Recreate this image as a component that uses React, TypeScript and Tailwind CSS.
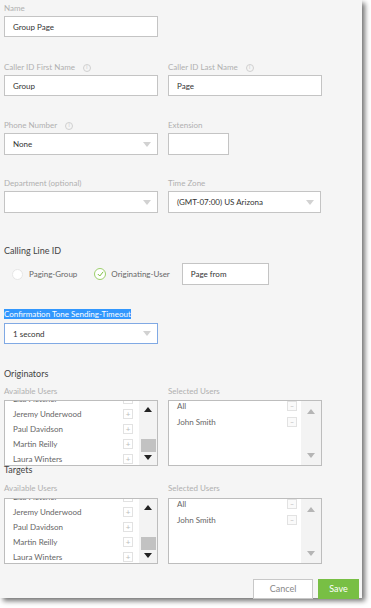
import React from "react";

const font = { fontFamily: "Lato, 'Open Sans', sans-serif" };

const Info = () => (
  <span className="ml-[8px] inline-flex h-[8px] w-[8px] items-center justify-center rounded-full border border-[#d0d0d0] text-[5px] leading-none text-[#c8c8c8]">
    i
  </span>
);

const Caret = ({ color = "#d2d2d2" }: { color?: string }) => (
  <svg width="8" height="5" viewBox="0 0 8 5">
    <path d="M0 0 L8 0 L4 5 Z" fill={color} />
  </svg>
);

const Label = ({ children, className = "" }: { children: React.ReactNode; className?: string }) => (
  <div className={"flex h-[11px] items-center text-[8px] leading-[11px] text-[#b0b0b0] " + className}>{children}</div>
);

const TextBox = ({ value, className = "" }: { value?: string; className?: string }) => (
  <div className={"flex items-center border border-[#c4c4c4] bg-white pl-[8px] text-[8px] text-[#333] " + className}>
    {value}
  </div>
);

const Select = ({ value, className = "" }: { value?: string; className?: string }) => (
  <div className={"flex items-center justify-between border border-[#c4c4c4] bg-white pl-[8px] pr-[6px] text-[8px] text-[#333] " + className}>
    <span>{value}</span>
    <Caret />
  </div>
);

const available = ["Lisa Fletcher", "Jeremy Underwood", "Paul Davidson", "Martin Reilly", "Laura Winters"];

const AvailableList = () => (
  <div className="flex h-[66px] w-[154px] border border-[#bdbdbd] bg-white">
    <div className="flex-1 overflow-hidden">
      <div className="-mt-[10px]">
        {available.map((n) => (
          <div key={n} className="flex h-[15px] items-center justify-between pl-[8px] pr-[6px] text-[8px] text-[#666]">
            <span>{n}</span>
            <span className="flex h-[10px] w-[10px] items-center justify-center border border-[#e2e2e2] text-[8px] leading-none text-[#bbb]">
              +
            </span>
          </div>
        ))}
      </div>
    </div>
    <div className="flex w-[18px] flex-col items-center bg-[#f3f3f3] pt-[6px]">
      <svg width="8" height="5" viewBox="0 0 8 5">
        <path d="M0 5 L8 5 L4 0 Z" fill="#222" />
      </svg>
      <div className="mt-[27px] h-[13px] w-[15px] bg-[#c2c2c2]" />
      <div className="mt-[3px]">
        <Caret color="#222" />
      </div>
    </div>
  </div>
);

const SelectedList = () => (
  <div className="flex h-[66px] w-[154px] border border-[#bdbdbd] bg-white">
    <div className="flex-1 overflow-hidden">
      <div className="-mt-[3px]">
        {["All", "John Smith"].map((n) => (
          <div key={n} className="flex h-[16px] items-center justify-between pl-[8px] pr-[4px] text-[8px] text-[#666]">
            <span>{n}</span>
            <span className="flex h-[10px] w-[10px] items-center justify-center border border-[#e2e2e2] bg-[#fafafa] text-[7px] leading-none text-[#bbb]">
              –
            </span>
          </div>
        ))}
      </div>
    </div>
    <div className="flex w-[20px] flex-col items-center justify-between bg-[#f3f3f3] pb-[7px] pt-[8px]">
      <svg width="8" height="5" viewBox="0 0 8 5">
        <path d="M0 5 L8 5 L4 0 Z" fill="#b5b5b5" />
      </svg>
      <Caret color="#b5b5b5" />
    </div>
  </div>
);

export default function App() {
  return (
    <div className="h-[608px] w-[371px] overflow-hidden bg-white" style={font}>
      <div className="h-[598px] w-[362px] bg-[#f5f5f5] pl-[4px] pt-[3px] shadow-[3px_3px_5px_rgba(0,0,0,0.55)]">
        <Label>Name</Label>
        <TextBox value="Group Page" className="mt-[2px] h-[21px] w-[154px]" />

        <div className="mt-[25px] flex gap-[10px]">
          <div>
            <Label>
              Caller ID First Name <Info />
            </Label>
            <TextBox value="Group" className="mt-[2px] h-[21px] w-[154px]" />
          </div>
          <div>
            <Label>
              Caller ID Last Name <Info />
            </Label>
            <TextBox value="Page" className="mt-[2px] h-[21px] w-[154px]" />
          </div>
        </div>

        <div className="mt-[24px] flex gap-[10px]">
          <div>
            <Label>
              Phone Number <Info />
            </Label>
            <Select value="None" className="mt-[2px] h-[22px] w-[154px]" />
          </div>
          <div>
            <Label>Extension</Label>
            <TextBox className="mt-[2px] h-[22px] w-[61px]" />
          </div>
        </div>

        <div className="mt-[23px] flex gap-[10px]">
          <div>
            <Label>Department (optional)</Label>
            <Select className="mt-[2px] h-[22px] w-[154px]" />
          </div>
          <div>
            <Label>Time Zone</Label>
            <Select value="(GMT-07:00) US Arizona" className="mt-[2px] h-[22px] w-[153px]" />
          </div>
        </div>

        <div className="mt-[33px] h-[10px] text-[9px] leading-[10px] text-[#444]">Calling Line ID</div>

        <div className="mt-[7px] flex h-[22px] items-center text-[8px] text-[#666]">
          <span className="ml-[8px] h-[11px] w-[11px] rounded-full border border-[#e6e6e6] bg-white" />
          <span className="ml-[6px]">Paging-Group</span>
          <span className="ml-[17px] flex h-[12px] w-[12px] items-center justify-center rounded-full border border-[#9ccf6b] bg-white">
            <svg width="7" height="6" viewBox="0 0 7 6">
              <path d="M0.8 3 L2.8 5 L6.2 0.8" fill="none" stroke="#7cbf3f" strokeWidth="1" />
            </svg>
          </span>
          <span className="ml-[5px]">Originating-User</span>
          <TextBox value="Page from" className="ml-[12px] h-[22px] w-[87px]" />
        </div>

        <div className="mt-[24px] flex h-[10px] items-center text-[8px] leading-[10px]">
          <span className="bg-[#3297fd] text-white">Confirmation Tone Sending-Timeout</span>
        </div>
        <div className="mt-[4px] flex h-[21px] w-[154px] items-center justify-between border border-[#80a9e4] bg-white pl-[8px] pr-[6px] text-[8px] text-[#333]">
          <span>1 second</span>
          <Caret />
        </div>

        <div className="mt-[25px] h-[10px] text-[9px] leading-[10px] text-[#444]">Originators</div>
        <div className="mt-[7px] flex gap-[10px]">
          <div>
            <Label>Available Users</Label>
            <div className="mt-[3px]">
              <AvailableList />
            </div>
          </div>
          <div>
            <Label>Selected Users</Label>
            <div className="mt-[3px]">
              <SelectedList />
            </div>
          </div>
        </div>

        <div className="-mt-[1px] h-[10px] text-[9px] leading-[10px] text-[#444]">Targets</div>
        <div className="mt-[8px] flex gap-[10px]">
          <div>
            <Label>Available Users</Label>
            <div className="mt-[4px]">
              <AvailableList />
            </div>
          </div>
          <div>
            <Label>Selected Users</Label>
            <div className="mt-[4px]">
              <SelectedList />
            </div>
          </div>
        </div>

        <div className="mt-[15px] flex justify-end gap-[5px] pr-[3px]">
          <button className="h-[20px] w-[60px] border border-[#c8c8c8] bg-white text-[9px] text-[#888]">Cancel</button>
          <button className="h-[20px] w-[41px] bg-[#78bf44] text-[9px] text-white">Save</button>
        </div>
      </div>
    </div>
  );
}
